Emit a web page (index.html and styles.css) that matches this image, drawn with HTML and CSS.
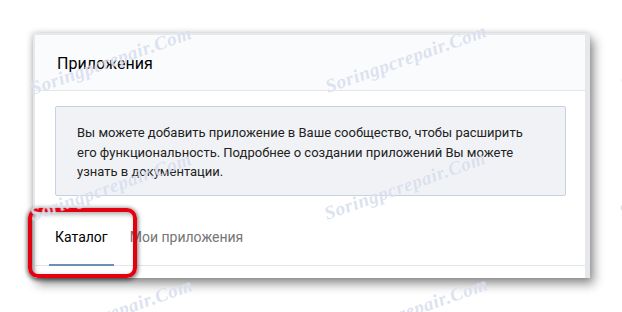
FILE: index.html
```html
<!DOCTYPE html>
<html lang="ru">
<head>
<meta charset="utf-8">
<title>Приложения</title>
<link rel="stylesheet" href="styles.css">
</head>
<body>
<div class="page">
  <div class="card">
    <div class="card-header">Приложения</div>
    <div class="card-body">
      <div class="info">Вы можете добавить приложение в Ваше сообщество, чтобы расширить его функциональность. Подробнее о создании приложений Вы можете узнать в документации.</div>
      <div class="tabs">
        <div class="tab active">Каталог</div>
        <div class="tab">Мои приложения</div>
      </div>
    </div>
  </div>
  <div class="highlight"></div>
  <div class="wm wm1">Soringpcrepair.Com</div>
  <div class="wm wm2">Soringpcrepair.Com</div>
  <div class="wm wm3">Soringpcrepair.Com</div>
  <div class="wm wm4">Soringpcrepair.Com</div>
  <div class="wm wm5">Soringpcrepair.Com</div>
  <div class="wm wm6">Soringpcrepair.Com</div>
  <div class="wm wm7">Soringpcrepair.Com</div>
  <div class="wm wm8">Soringpcrepair.Com</div>
</div>
</body>
</html>
```
FILE: styles.css
```css
html, body {
  margin: 0;
  padding: 0;
  background: #ffffff;
}
body {
  font-family: Roboto, "Liberation Sans", Arial, sans-serif;
  width: 622px;
  height: 312px;
  overflow: hidden;
}
.page {
  position: relative;
  width: 622px;
  height: 312px;
  overflow: hidden;
  padding: 33px 0 0 33px;
  box-sizing: border-box;
}
.card {
  width: 557px;
  box-sizing: border-box;
  border: 2px solid #e6e8ec;
  border-right-width: 5px;
  border-bottom-width: 0;
  background: #ffffff;
  box-shadow: 4px 6px 10px rgba(0, 0, 0, 0.42), -1px 0 6px rgba(0, 0, 0, 0.18);
}
.card-header {
  height: 56px;
  box-sizing: border-box;
  padding: 19px 0 0 22px;
  font-size: 16px;
  color: #000;
  background: #fafbfc;
  border-bottom: 1px solid #e3e6ea;
}
.card-body {
  padding: 15px 19px 12px 20px;
}
.info {
  background: #f0f2f5;
  border: 1px solid #c8d2de;
  border-radius: 2px;
  padding: 16px 20px 13px 21px;
  font-size: 13px;
  line-height: 19.5px;
  color: #222;
}
.tabs {
  display: flex;
  gap: 10px;
  margin: 16px -19px 0 -20px;
  padding-left: 14px;
  border-bottom: 1px solid #e3e6ea;
}
.tab {
  padding: 17px 6px 19px;
  font-size: 14px;
  color: #767676;
  border-bottom: 2px solid transparent;
  margin-bottom: -1px;
}
.tab.active {
  color: #000;
  border-bottom-color: #6d8fb3;
}
.highlight {
  position: absolute;
  left: 28px;
  top: 208px;
  width: 109px;
  height: 70px;
  box-sizing: border-box;
  border: 4px solid #e4000f;
  border-radius: 10px;
  box-shadow: 0 1px 4px 1px rgba(0, 0, 0, 0.55), inset 2px 2px 5px rgba(0, 0, 0, 0.35);
}
.wm {
  position: absolute;
  width: 220px;
  height: 24px;
  line-height: 24px;
  text-align: center;
  font-family: "Liberation Serif", "Times New Roman", serif;
  font-style: italic;
  font-weight: bold;
  font-size: 19px;
  letter-spacing: 0.6px;
  color: rgba(170, 184, 218, 0.42);
  text-shadow: 0 0 1px rgba(255, 255, 255, 0.9);
  transform: rotate(-19.6deg);
  pointer-events: none;
  white-space: nowrap;
}
.wm1 { left: 1px; top: 49px; }
.wm2 { left: 296px; top: 47px; }
.wm3 { left: 591px; top: 45px; }
.wm4 { left: 1px; top: 175px; }
.wm5 { left: 295px; top: 174px; }
.wm6 { left: 590px; top: 172px; }
.wm7 { left: 2px; top: 301px; }
.wm8 { left: 297px; top: 300px; }
```
